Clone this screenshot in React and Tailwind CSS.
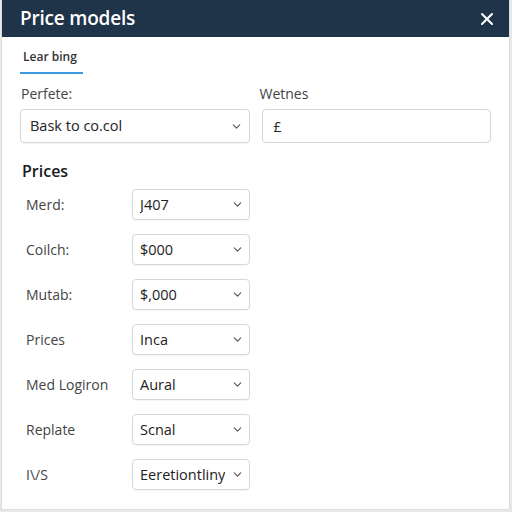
import React from 'react';
import { X, ChevronDown } from 'lucide-react';

const ROWS = [
  { label: 'Merd:', value: 'J407' },
  { label: 'Coilch:', value: '$000' },
  { label: 'Mutab:', value: '$,000' },
  { label: 'Prices', value: 'Inca' },
  { label: 'Med Logiron', value: 'Aural' },
  { label: 'Replate', value: 'Scnal' },
  { label: 'I\\/S', value: 'Eeretiontliny' },
];

function Select({ value, className }) {
  return (
    <div className={`flex items-center justify-between border border-[#d4d7db] rounded-[4px] bg-white shadow-[0_1px_1px_rgba(0,0,0,0.04)] ${className}`}>
      <span className="text-[#222] truncate">{value}</span>
      <ChevronDown size={13} strokeWidth={2} className="text-[#555] shrink-0" />
    </div>
  );
}

export default function App() {
  return (
    <div className="w-[512px] h-[512px] bg-[#e6e8ea] pl-[1px] pr-[2px] pb-[2px]" style={{ fontFamily: '"Open Sans", sans-serif' }}>
      <div className="h-full bg-white border-l border-r border-b border-[#dcdfe2] flex flex-col">
        {/* Header */}
        <div className="h-[37px] bg-[#1f3349] flex items-center justify-between pl-[18px] pr-[12px] shrink-0">
          <h1 className="text-white text-[19px] font-semibold tracking-[-0.2px]">Price models</h1>
          <X size={20} strokeWidth={2.5} className="text-white" />
        </div>

        {/* Tab */}
        <div className="px-[18px] pt-[6px]">
          <div className="inline-flex flex-col">
            <span className="text-[12px] font-semibold text-[#333] px-[3px]">Lear bing</span>
            <div className="h-[2px] bg-[#3a9be0] mt-[6px] w-[63px]" />
          </div>
        </div>

        {/* Top fields */}
        <div className="px-[18px] pt-[10px] grid grid-cols-2 gap-x-[12px]">
          <div>
            <div className="text-[14px] text-[#444] leading-[20px] pl-[1px]">Perfete:</div>
            <Select value="Bask to co.col" className="mt-[5px] h-[34px] pl-[9px] pr-[6px] text-[14.5px]" />
          </div>
          <div>
            <div className="text-[14px] text-[#444] leading-[20px] -ml-[2px]">Wetnes</div>
            <div className="mt-[5px] h-[34px] border border-[#d4d7db] rounded-[4px] flex items-center pl-[11px] text-[14px] text-[#222]">£</div>
          </div>
        </div>

        {/* Prices */}
        <div className="px-[19px] pt-[17px]">
          <h2 className="text-[16px] font-semibold text-[#1a1a1a] leading-[22px] pl-[1px]">Prices</h2>
          <div className="mt-[7px] flex flex-col gap-[14px]">
            {ROWS.map((r) => (
              <div key={r.value} className="flex items-center">
                <span className="w-[111px] pl-[5px] text-[14px] text-[#444]">{r.label}</span>
                <Select value={r.value} className="w-[118px] h-[31px] pl-[7px] pr-[5px] text-[14.5px]" />
              </div>
            ))}
          </div>
        </div>
      </div>
    </div>
  );
}
